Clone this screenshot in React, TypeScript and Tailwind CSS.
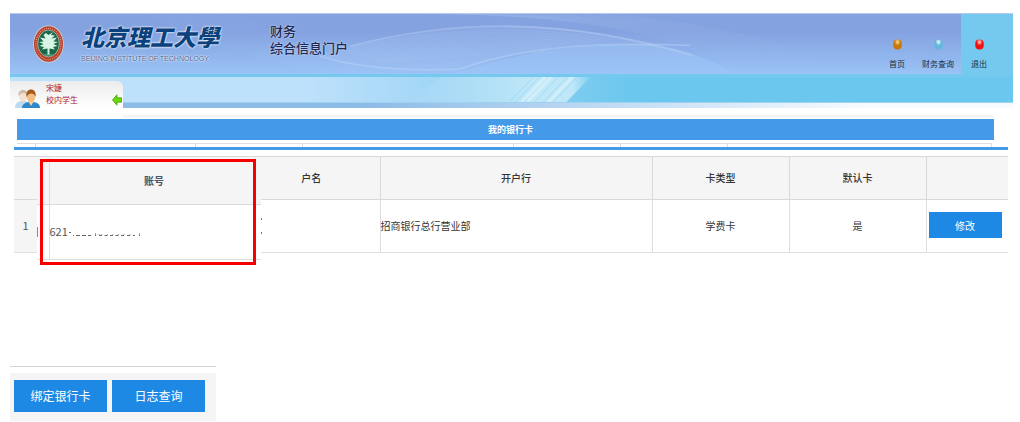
import React from 'react';

interface NavItem {
  label: string;
  color: string;
  shine: string;
  className: string;
}

interface BankCard {
  id: number;
  bank: string;
  cardType: string;
  isDefault: string;
}

const navItems: NavItem[] = [
  { label: '首页', color: '#c87808', shine: '#ffe2a0', className: 'w-9' },
  { label: '财务查询', color: '#62b8dc', shine: '#f2fcff', className: 'w-[46px]' },
  { label: '退出', color: '#f01010', shine: '#ffd8d8', className: 'w-[52px] bg-[#75c8ee] pr-4' },
];

const cards: BankCard[] = [
  { id: 1, bank: '招商银行总行营业部', cardType: '学费卡', isDefault: '是' },
];

const waves = Array.from({ length: 14 }, (_, i) => i);

const HeaderWaves: React.FC = () => (
  <svg className="absolute inset-0 h-full w-full" viewBox="0 0 1003 61" preserveAspectRatio="none" fill="none" aria-hidden="true">
    <path d="M445 61 C510 38 560 30 640 31 C680 36 710 50 725 61 Z" fill="#9dc6f8" opacity=".5" />
    <path d="M330 37 C430 8 540 2 650 33 C560 28 510 38 440 60 C390 60 330 54 310 42 Z" fill="#a5c0f0" opacity=".25" />
    {waves.map(i => (
      <path
        key={i}
        d={`M${330 + i * 3} ${36 + i} C${420 + i * 4} ${14 + i * 2} ${530 + i * 3} ${11 + i * 2} ${600 - i * 6} ${26 + i}`}
        stroke="#c4d8f8"
        strokeWidth=".6"
        opacity=".22"
      />
    ))}
    {waves.map(i => (
      <path
        key={i}
        d={`M${420 + i * 14} 0 C${560 + i * 12} ${i} ${680 + i * 9} ${20 + i} ${730 + i * 7} 61`}
        stroke="#b4ccf4"
        strokeWidth=".6"
        opacity=".25"
      />
    ))}
    {waves.map(i => (
      <path
        key={i}
        d={`M${140 + i * 7} 0 C${180 + i * 6} 22 ${240 + i * 6} 48 ${330 + i * 6} 61`}
        stroke="#b4ccf4"
        strokeWidth=".6"
        opacity=".2"
      />
    ))}
    <path d="M340 33 C440 6 550 2 682 42" stroke="#c0d4f6" strokeWidth="2" opacity=".4" />
    <path d="M310 43 C350 56 400 58 450 56 C510 34 580 28 680 32" stroke="#c0dafa" strokeWidth="1.6" opacity=".4" />
  </svg>
);

const Crest: React.FC = () => (
  <svg className="h-[38px] w-[31px]" viewBox="0 0 31 38" aria-hidden="true">
    <ellipse cx="15.5" cy="19" rx="15.2" ry="18.6" fill="#d8d5d0" />
    <ellipse cx="15.5" cy="19" rx="14.5" ry="17.8" fill="#b8402c" />
    <ellipse cx="15.5" cy="19" rx="12.6" ry="15.7" fill="none" stroke="#dc9c86" strokeWidth="1.2" strokeDasharray="1 1.2" />
    <ellipse cx="15.5" cy="18.5" rx="10.8" ry="13.4" fill="#17694a" stroke="#e4e0d4" strokeWidth=".6" />
    <path d="M13 8 L15.5 10 L20 7 L18 10 L22 10.5 L18.5 13.5 L24 12.5 L20.5 16.5 L25 17 L20.5 19 L24.5 21 L20 22 L22 24.5 L16.5 23.5 V30 H14.5 V23.5 L9 24.5 L11 22 L6.5 21 L10.5 19 L6 17 L10.5 16.5 L7 12.5 L12.5 13.5 L10.5 10 Z" fill="#d9f3e4" />
    <path d="M11 30 H20" stroke="#6cb28b" strokeWidth="1" />
  </svg>
);

const UserIcon: React.FC = () => (
  <svg className="h-[20px] w-[26px]" viewBox="0 0 26 20" aria-hidden="true">
    <g opacity=".4">
      <path d="M0 20 C0 14 4 13 8 13 C12 13 15 14 15 20 Z" fill="#5aa9dc" />
      <ellipse cx="8" cy="8" rx="4" ry="5.5" fill="#f0c090" />
      <path d="M3.5 8 C2 0 14 0 12.5 8 C11 4 6 4 3.5 8 Z" fill="#9a6a38" />
    </g>
    <path d="M7 20 C7 15 12 14 16 14 C21 14 25 15 25 20 Z" fill="#2f86c8" />
    <path d="M13 13 H19 L16 18 Z" fill="#f4d0a0" />
    <ellipse cx="16" cy="8.5" rx="4.2" ry="6" fill="#f3bf85" />
    <path d="M11.5 9 C9.5 -1 22.5 -1 20.5 9 C19.5 4.5 14 4 11.5 9 Z" fill="#a85818" />
  </svg>
);

const ButtonDot: React.FC<{ id: number; color: string; shine: string }> = ({ id, color, shine }) => (
  <svg className="h-[11px] w-[9px]" viewBox="0 0 9 11" aria-hidden="true">
    <defs>
      <radialGradient id={`dot-${id}`} cx=".5" cy=".25" r=".6">
        <stop offset="0" stopColor={shine} />
        <stop offset=".6" stopColor={color} />
      </radialGradient>
    </defs>
    <rect x=".3" y=".5" width="8.4" height="10" rx="4" fill={`url(#dot-${id})`} />
  </svg>
);

const Header: React.FC = () => (
  <header className="mt-[13px] mr-[7px] ml-[10px]">
    <div className="relative flex h-[61px] justify-between border-t border-[#b4cbee] bg-linear-to-b from-[#84a2e0] from-30% to-[#9ac3f6]">
      <HeaderWaves />
      <div className="relative flex">
        <div className="pt-[11px] pl-[23px]">
          <Crest />
        </div>
        <div className="w-[206px] pt-[8px] pl-[17px]">
          <div className="text-[23px] leading-[28px] font-black text-[#0b417c] italic [text-shadow:0_0_2px_#fff,0_0_2px_#fff]">北京理工大學</div>
          <div className="mt-[3px] font-['Liberation_Sans',sans-serif] text-[7px] leading-[12px] whitespace-nowrap text-[#4d6690] [text-shadow:0_0_2px_#fff,0_0_2px_#fff]">BEIJING INSTITUTE OF TECHNOLOGY</div>
        </div>
        <h1 className="pt-[8px] text-[13px] leading-[17px] font-medium text-[#1f2a52] [text-shadow:0_0_2px_#dfe8fb]">
          财务
          <br />
          综合信息门户
        </h1>
      </div>
      <nav className="relative flex">
        {navItems.map((item, i) => (
          <a
            key={item.label}
            href="#"
            className={`flex flex-col items-center pt-[25px] text-[8px] leading-[12px] whitespace-nowrap text-[#222c3c] ${item.className}`}
          >
            <ButtonDot id={i} color={item.color} shine={item.shine} />
            <span className="mt-2">{item.label}</span>
          </a>
        ))}
      </nav>
    </div>
    <div className="h-[3px] bg-[#75c8ee]" />
    <div className="relative h-[42px]">
      <div className="h-[26px] border-b border-[#9fd2ef] bg-linear-to-r from-[#bde0fb] from-30% via-[#8fd0f2] via-50% to-[#6bc7ee] to-62%" />
      <div className="h-[5px] bg-linear-to-r from-[#8cbbe7] from-35% to-[#f6fbff] to-85%" />
      <div className="mt-[7px] mr-[20px] ml-[7px] h-[3px] bg-[#f5f5f5]" />
      <svg className="absolute top-0 left-[40%] h-[25px] w-[18%]" viewBox="0 0 180 25" preserveAspectRatio="none" aria-hidden="true">
        <defs>
          <linearGradient id="streak">
            <stop offset="0" stopColor="#d4f0fb" stopOpacity="0" />
            <stop offset=".7" stopColor="#d4f0fb" stopOpacity=".75" />
            <stop offset=".9" stopColor="#d4f0fb" stopOpacity=".75" />
            <stop offset="1" stopColor="#d4f0fb" stopOpacity=".1" />
          </linearGradient>
        </defs>
        <path d="M30 0 H179 L155 25 H0 Z" fill="url(#streak)" />
        <path d="M122 0 L98 25 M128 0 L104 25 M147 0 L123 25 M156 0 L132 25 M166 0 L142 25" stroke="#8ed3ee" strokeWidth=".8" opacity=".7" />
        <path d="M134 0 L110 25 M140 0 L116 25 M161 0 L137 25" stroke="#e4f7fd" strokeWidth="3" opacity=".5" />
      </svg>
      <div className="absolute top-[4px] left-0 flex h-[38px] w-[113px] rounded-tr-md bg-linear-to-b from-[#ececec] to-white to-70% text-[8px] leading-[12px] text-[#b01828]">
        <div className="mt-[7px] ml-[5px]">
          <UserIcon />
        </div>
        <div className="mt-[1px] ml-[5px] flex-1 whitespace-nowrap">
          <div>宋婕</div>
          <div>校内学生</div>
        </div>
        <button type="button" aria-label="收起" className="mt-[13px] mr-[1px] h-[12px] w-[10px]">
          <svg className="h-[12px] w-[10px]" viewBox="0 0 10 12" aria-hidden="true">
            <path d="M.5 6 L5 .8 V3.8 H9.5 V8.2 H5 V11.2 Z" fill="#6bd80c" stroke="#3f9f0c" strokeWidth=".8" />
          </svg>
        </button>
      </div>
    </div>
  </header>
);

const AccountHighlight: React.FC = () => (
  <div className="absolute top-[2px] left-[23px] w-[224px] bg-white">
    <table className="w-full table-fixed border-collapse text-[10px]">
      <colgroup>
        <col className="w-[12px]" />
        <col />
        <col className="w-[6px]" />
      </colgroup>
      <thead>
        <tr className="h-[46px] border-b border-[#d9d9d9] bg-[#f5f5f5]">
          <td className="border-r border-[#dedede]" />
          <th className="border-r border-[#dedede] pl-1 font-bold text-[#4c5662]">账号</th>
          <td />
        </tr>
      </thead>
      <tbody>
        <tr className="h-[55px] border-b border-[#dedede]">
          <td className="border-r border-[#dedede]">
            <div className="h-[10px] w-px bg-[#7c8796]" />
          </td>
          <td className="border-r border-[#dedede] text-[11px] text-[#555]">
            <div className="flex items-center">
              <span>621</span>
              <svg className="h-[10px] w-[76px]" viewBox="0 0 76 10" fill="none" stroke="#666" aria-hidden="true">
                <path d="M1 5.5 h2" />
                <path d="M5 8.5 h1 M8 8.5 h4 M14 8.5 h4 M20 8.5 h3 M27 8.5 h1 M31 8.5 h3 M36.5 8.5 h3 M42 8.5 h3 M47.5 8.5 h3 M53 8.5 h3 M59 8.5 h3 M65 8.5 h2 M71 8.5 h1" />
                <path d="M27.5 6 v2 M31 7 v1 M34 7 v1 M39.5 7 v1 M45 7 v1 M50.5 7 v1 M56 7 v1 M62 7 v1 M71.5 6 v2" opacity=".6" />
              </svg>
            </div>
          </td>
          <td />
        </tr>
      </tbody>
    </table>
    <div className="absolute top-px left-[3px] h-[106px] w-[216px] border-3 border-[#f90000]" />
  </div>
);

const CardTable: React.FC = () => (
  <div className="relative mt-[6px] mr-[12px] ml-[14px]">
    <table className="w-full table-fixed border-collapse text-[10px] text-[#333]">
      <colgroup>
        <col className="w-[23px]" />
        <col className="w-[206px]" />
        <col className="w-[137px]" />
        <col />
        <col className="w-[137px]" />
        <col className="w-[137px]" />
        <col className="w-[82px]" />
      </colgroup>
      <thead>
        <tr className="h-[43px] border-t border-b border-[#d9d9d9] bg-[#f5f5f5]">
          <td />
          <td />
          <th className="border-r border-[#d9d9d9] pb-[2px] font-medium">户名</th>
          <th className="border-r border-[#d9d9d9] pb-[2px] font-medium">开户行</th>
          <th className="border-r border-[#d9d9d9] pb-[2px] font-medium">卡类型</th>
          <th className="border-r border-[#d9d9d9] pb-[2px] font-medium">默认卡</th>
          <td />
        </tr>
      </thead>
      <tbody>
        {cards.map(card => (
          <tr key={card.id} className="h-[53px] border-b border-[#dedede]">
            <td className="bg-[#f5f5f5] pb-[2px] text-center text-[11px] text-[#555]">{card.id}</td>
            <td />
            <td className="border-r border-[#dedede] pl-[18px]">
              <div className="h-[2px] w-px bg-[#777]" />
              <div className="mt-[12px] h-[2px] w-px bg-[#777]" />
            </td>
            <td className="border-r border-[#dedede] pb-[2px]">{card.bank}</td>
            <td className="border-r border-[#dedede] pb-[2px] text-center">{card.cardType}</td>
            <td className="border-r border-[#dedede] pb-[2px] text-center">{card.isDefault}</td>
            <td className="pb-[2px] pl-[2px]">
              <button type="button" className="block h-[26px] w-[73px] bg-[#1e88e5] text-white">修改</button>
            </td>
          </tr>
        ))}
      </tbody>
    </table>
    <AccountHighlight />
  </div>
);

const App: React.FC = () => {
  return (
    <div className="bg-white font-['Noto_Sans_CJK_SC','Liberation_Sans',sans-serif]">
      <Header />
      <main>
        <h2 className="mr-[26px] ml-[17px] h-[21px] bg-[#4499e8] pl-[10px] text-center text-[9px] leading-[22px] font-bold text-white">我的银行卡</h2>
        <div className="mt-[3px] mr-[28px] ml-[17px] flex h-[4px] border-t border-r border-[#dedede]">
          <div className="w-[19px] border-r border-[#dedede]" />
          <div className="w-[160px] border-r border-[#dedede]" />
          <div className="w-[107px] border-r border-[#dedede]" />
          <div className="flex-1 border-r border-[#dedede]" />
          <div className="w-[107px] border-r border-[#dedede]" />
          <div className="w-[107px] border-r border-[#dedede]" />
          <div className="w-[263px]" />
        </div>
        <div className="mr-[12px] ml-[14px] h-[3px] bg-[#4499e8]" />
        <CardTable />
      </main>
      <footer className="mt-[113px] ml-[10px] w-[206px] border-t border-[#d4d4d4]">
        <div className="mt-[6px] flex h-[48px] gap-[5px] bg-[#f5f5f5] px-[4px] pt-[7px] text-[12px] text-white">
          <button type="button" className="h-[32px] w-[93px] bg-[#1e88e5]">绑定银行卡</button>
          <button type="button" className="h-[32px] w-[93px] bg-[#1e88e5]">日志查询</button>
        </div>
      </footer>
    </div>
  );
};

export default App;
